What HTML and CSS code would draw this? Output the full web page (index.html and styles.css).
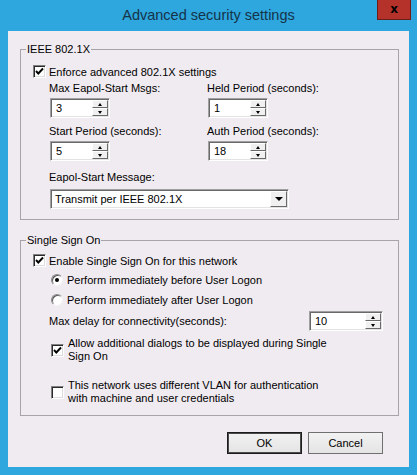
FILE: index.html
```html
<!DOCTYPE html>
<html>
<head>
<meta charset="utf-8">
<link rel="stylesheet" href="styles.css">
</head>
<body>
<div class="window">
  <div class="titlebar">
    <span class="title">Advanced security settings</span>
    <div class="close">x</div>
  </div>
  <div class="client">
    <fieldset class="group g1">
      <legend>IEEE 802.1X</legend>
      <div class="check-row">
        <span class="cb"><svg width="11" height="11" viewBox="0 0 11 11"><path d="M2 5 L4.3 7.5 L9 2.5" fill="none" stroke="#000" stroke-width="1.9"/></svg></span>
        <span>Enforce advanced 802.1X settings</span>
      </div>
      <div class="fields">
        <div class="field">
          <div class="lbl">Max Eapol-Start Msgs:</div>
          <div class="spin"><span class="val">3</span><span class="btns"><span class="sb"><i class="up"></i></span><span class="sb"><i class="down"></i></span></span></div>
        </div>
        <div class="field">
          <div class="lbl">Held Period (seconds):</div>
          <div class="spin"><span class="val">1</span><span class="btns"><span class="sb"><i class="up"></i></span><span class="sb"><i class="down"></i></span></span></div>
        </div>
        <div class="field">
          <div class="lbl">Start Period (seconds):</div>
          <div class="spin"><span class="val">5</span><span class="btns"><span class="sb"><i class="up"></i></span><span class="sb"><i class="down"></i></span></span></div>
        </div>
        <div class="field">
          <div class="lbl">Auth Period (seconds):</div>
          <div class="spin"><span class="val">18</span><span class="btns"><span class="sb"><i class="up"></i></span><span class="sb"><i class="down"></i></span></span></div>
        </div>
      </div>
      <div class="lbl msg-lbl">Eapol-Start Message:</div>
      <div class="combo"><span class="val">Transmit per IEEE 802.1X</span><span class="drop"><i class="down big"></i></span></div>
    </fieldset>

    <fieldset class="group g2">
      <legend>Single Sign On</legend>
      <div class="check-row">
        <span class="cb"><svg width="11" height="11" viewBox="0 0 11 11"><path d="M2 5 L4.3 7.5 L9 2.5" fill="none" stroke="#000" stroke-width="1.9"/></svg></span>
        <span>Enable Single Sign On for this network</span>
      </div>
      <div class="radio-row r1"><span class="rb on"><span class="dot"></span></span><span>Perform immediately before User Logon</span></div>
      <div class="radio-row r2"><span class="rb"></span><span>Perform immediately after User Logon</span></div>
      <div class="delay-row">
        <span>Max delay for connectivity(seconds):</span>
        <div class="spin wide"><span class="val">10</span><span class="btns"><span class="sb"><i class="up"></i></span><span class="sb"><i class="down"></i></span></span></div>
      </div>
      <div class="multi-row allow">
        <span class="cb"><svg width="11" height="11" viewBox="0 0 11 11"><path d="M2 5 L4.3 7.5 L9 2.5" fill="none" stroke="#000" stroke-width="1.9"/></svg></span>
        <span class="mtext">Allow additional dialogs to be displayed during Single<br>Sign On</span>
      </div>
      <div class="multi-row vlan">
        <span class="cb"></span>
        <span class="mtext">This network uses different VLAN for authentication<br>with machine and user credentials</span>
      </div>
    </fieldset>

    <div class="buttons">
      <div class="btn default">OK</div>
      <div class="btn">Cancel</div>
    </div>
  </div>
</div>
</body>
</html>
```

FILE: styles.css
```css
* { box-sizing: border-box; }
html, body { margin: 0; padding: 0; }
body {
  font-family: "Liberation Sans", Arial, sans-serif;
  font-size: 11px;
  color: #000;
  background: #2ea7de;
}
.window {
  width: 417px;
  height: 475px;
  background: #2ea7de;
  display: flex;
  flex-direction: column;
}
.titlebar {
  height: 31px;
  display: grid;
  grid-template-columns: 1fr auto 1fr;
  align-items: start;
}
.title {
  grid-column: 2;
  font-size: 14.5px;
  color: #15334a;
  line-height: 31px;
  padding-top: 0;
}
.close {
  grid-column: 3;
  justify-self: end;
  margin-right: 6px;
  width: 34px;
  height: 20px;
  background: #b5322b;
  border: 1px solid #6f1f1a;
  border-top: none;
  color: #000;
  font-weight: bold;
  font-size: 12px;
  line-height: 18px;
  text-align: center;
  font-family: "DejaVu Sans", sans-serif;
}
.client {
  margin: 0 8px;
  height: 436px;
  background: #f0ebf0;
  padding: 11px 10px 0 12px;
}
.group {
  margin: 0;
  border: 1px solid #a7a3a7;
  padding: 0 10px 10px 12px;
  width: 379px;
  min-width: 0;
}
.group legend {
  margin-left: -7px;
  padding: 0 1px;
  line-height: 14px;
  height: 14px;
}
.g2 { margin-top: 13px; }
.check-row {
  display: flex;
  align-items: center;
  height: 15px;
  gap: 3px;
}
.g1 .check-row { margin-top: 8px; }
.g2 .check-row { margin-top: 6px; }
.cb {
  width: 13px;
  height: 13px;
  background: #fff;
  border: 1px solid;
  border-color: #808080 #fff #fff #808080;
  box-shadow: inset 1px 1px 0 #2a2a2a, inset -1px -1px 0 #dcdcdc;
  display: flex;
  align-items: center;
  justify-content: center;
  flex: none;
}
.cb svg { display: block; }
.fields {
  margin-left: 16px;
  display: grid;
  grid-template-columns: 158px auto;
  row-gap: 6px;
  margin-top: 2px;
}
.lbl { line-height: 14px; height: 14px; }
.field .spin { margin-top: 3px; margin-left: 1px; }
.spin {
  width: 60px;
  height: 20px;
  display: flex;
  background: #fff;
  border: 1px solid;
  border-color: #a0a0a0 #fff #fff #a0a0a0;
  box-shadow: inset 1px 1px 0 #696969, inset -1px -1px 0 #e3e3e3;
  padding: 1px;
}
.spin.wide { width: 74px; }
.val {
  flex: 1;
  padding-left: 4px;
  line-height: 16px;
  white-space: nowrap;
}
.btns {
  width: 16px;
  display: flex;
  flex-direction: column;
}
.sb {
  flex: 1;
  background: #f0f0f0;
  border: 1px solid;
  border-color: #fff #696969 #696969 #fff;
  display: flex;
  align-items: center;
  justify-content: center;
}
.up, .down {
  display: block;
  width: 0;
  height: 0;
  border-left: 2.5px solid transparent;
  border-right: 2.5px solid transparent;
}
.up { border-bottom: 3px solid #000; }
.down { border-top: 3px solid #000; }
.down.big {
  border-left-width: 4px;
  border-right-width: 4px;
  border-top-width: 4px;
}
.msg-lbl { margin: 9px 0 0 16px; }
.combo {
  margin: 5px 0 0 17px;
  width: 239px;
  height: 20px;
  display: flex;
  background: #fff;
  border: 1px solid;
  border-color: #a0a0a0 #fff #fff #a0a0a0;
  box-shadow: inset 1px 1px 0 #696969, inset -1px -1px 0 #e3e3e3;
  padding: 1px;
}
.combo .val { padding-left: 3px; }
.drop {
  width: 17px;
  background: #f0f0f0;
  border: 1px solid;
  border-color: #fff #696969 #696969 #fff;
  display: flex;
  align-items: center;
  justify-content: center;
}
.radio-row {
  display: flex;
  align-items: center;
  height: 15px;
  gap: 4px;
  margin-left: 18px;
}
.r1 { margin-top: 4px; }
.r2 { margin-top: 5px; }
.rb {
  width: 12px;
  height: 12px;
  border-radius: 50%;
  background: #fff;
  border: 1px solid;
  border-color: #8a8a8a #f4f4f4 #f4f4f4 #8a8a8a;
  box-shadow: inset 1px 1px 0 #5a5a5a;
  display: flex;
  align-items: center;
  justify-content: center;
  flex: none;
}
.dot {
  width: 4px;
  height: 4px;
  border-radius: 50%;
  background: #000;
}
.delay-row {
  margin: 4px 5px 0 16px;
  height: 20px;
  display: flex;
  align-items: center;
  justify-content: space-between;
}
.multi-row {
  display: flex;
  align-items: center;
  gap: 4px;
  margin-left: 18px;
}
.mtext { line-height: 13px; }
.allow { margin-top: 6px; }
.vlan { margin-top: 16px; }
.buttons {
  margin-top: 16px;
  margin-right: 16px;
  display: flex;
  justify-content: flex-end;
  gap: 6px;
}
.btn {
  width: 75px;
  height: 22px;
  border: 1px solid #707070;
  background: linear-gradient(#f2f2f2, #e4e4e4);
  display: flex;
  align-items: center;
  justify-content: center;
}
.btn.default {
  border: 1px solid #1c1c1c;
  box-shadow: inset 0 0 0 1px #4a4a4a;
}
```
